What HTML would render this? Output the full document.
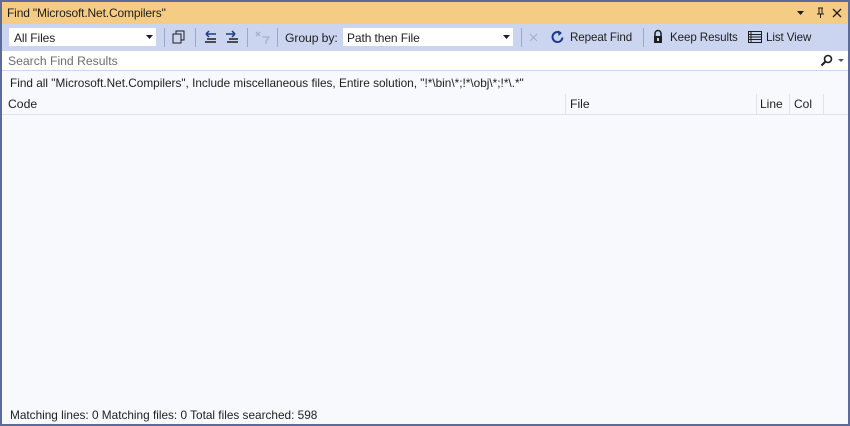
<!DOCTYPE html>
<html><head><meta charset="utf-8"><style>
*{margin:0;padding:0;box-sizing:border-box}
body{width:850px;height:426px;overflow:hidden;background:#5d6b99;font-family:"Liberation Sans",sans-serif;font-size:12px;color:#1e1e1e;position:relative}
.abs{position:absolute}
#title{left:2px;top:2px;width:846px;height:22px;background:#f5cc84;}
#title span{position:absolute;left:5px;top:4px;font-size:12px;letter-spacing:-0.15px}
#tb{left:2px;top:24px;width:846px;height:27px;background:#ccd5f0}
#main{left:2px;top:51px;width:846px;height:373px;background:#f8f9fd}
.sep{position:absolute;top:4px;width:1px;height:19px;background:#9aa7c9}
.combo{position:absolute;top:3px;height:20px;background:#fff;border:1px solid #ccd5f0}
.txt{position:absolute;white-space:nowrap}
.t{font-size:11.6px;letter-spacing:-0.1px}
</style></head><body>
<div id="title" class="abs"><span>Find "Microsoft.Net.Compilers"</span>
<svg class="abs" style="left:794px;top:8px" width="10" height="6"><path d="M1 1h7l-3.5 4z" fill="#1e1e1e"/></svg>
<svg class="abs" style="left:813px;top:5px" width="10" height="12"><path d="M3 1h5M4 1v6M7 1v6M2 7h7M5.5 7v4" stroke="#1e1e1e" fill="none"/></svg>
<svg class="abs" style="left:830px;top:6px" width="10" height="10"><path d="M1 1l8 8M9 1l-8 8" stroke="#1e1e1e" stroke-width="1.3"/></svg>
</div>
<div id="tb" class="abs">
<div class="combo" style="left:6px;width:149px"><span class="txt t" style="left:5px;top:3px;font-size:12px">All Files</span>
<svg class="abs" style="left:137px;top:7px" width="7" height="5"><path d="M0 0h7l-3.5 4z" fill="#1e1e1e"/></svg></div>
<div class="sep" style="left:162px"></div>
<svg class="abs" style="left:169px;top:5px" width="16" height="16"><rect x="2" y="5" width="8" height="9" fill="none" stroke="#1e1e1e"/><path d="M5 5V2h8v9h-3" fill="none" stroke="#1e1e1e"/></svg>
<div class="sep" style="left:193px"></div>
<svg class="abs" style="left:200px;top:5px" width="16" height="16"><path d="M4 5h10M4 5l3-3M4 5l3 3" stroke="#1e3a8a" fill="none" stroke-width="1.5"/><path d="M5 10h9M3 13h11" stroke="#1e1e1e" stroke-width="1.6"/></svg>
<svg class="abs" style="left:222px;top:5px" width="16" height="16"><path d="M2 5h9M11 5l-3-3M11 5l-3 3" stroke="#1e3a8a" fill="none" stroke-width="1.5"/><path d="M5 10h9M3 13h11" stroke="#1e1e1e" stroke-width="1.6"/></svg>
<div class="sep" style="left:245px"></div>
<svg class="abs" style="left:252px;top:5px" width="16" height="16"><path d="M2 3l4 4M6 3l-4 4M8 8h7l-3 4v3" stroke="#a7b0c8" fill="none" stroke-width="1.3"/></svg>
<div class="sep" style="left:275px"></div>
<span class="txt t" style="left:283px;top:7px;font-size:12.2px">Group by:</span>
<div class="combo" style="left:340px;width:172px"><span class="txt t" style="left:4px;top:3px;font-size:12px">Path then File</span>
<svg class="abs" style="left:160px;top:7px" width="7" height="5"><path d="M0 0h7l-3.5 4z" fill="#1e1e1e"/></svg></div>
<div class="sep" style="left:519px"></div>
<svg class="abs" style="left:527px;top:9px" width="10" height="10"><path d="M1 1l7 7M8 1l-7 7" stroke="#a7b0c8" stroke-width="1.2"/></svg>
<svg class="abs" style="left:548px;top:5px" width="16" height="16"><path d="M12.5 8.5a5 5 0 1 1-2-4.5" stroke="#1e3a8a" fill="none" stroke-width="2"/><path d="M8 1.5l4 2.5-3.5 3z" fill="#1e3a8a"/></svg>
<span class="txt t" style="left:568px;top:7px">Repeat Find</span>
<div class="sep" style="left:641px"></div>
<svg class="abs" style="left:650px;top:5px" width="12" height="16"><path d="M3 7V4.5a3 3 0 0 1 6 0V7" stroke="#1e1e1e" fill="none" stroke-width="1.5"/><rect x="2" y="7" width="8" height="7" fill="#1e1e1e"/><rect x="5" y="9" width="2" height="3" fill="#ccd5f0"/></svg>
<span class="txt t" style="left:668px;top:7px">Keep Results</span>
<svg class="abs" style="left:745px;top:5px" width="16" height="16"><rect x="1.5" y="2.5" width="13" height="11" fill="none" stroke="#1e1e1e"/><path d="M4 2.5v11M1.5 5.5h13M1.5 8h13M1.5 10.5h13" stroke="#1e1e1e"/></svg>
<span class="txt t" style="left:764px;top:7px">List View</span>
</div>
<div id="main" class="abs">
<div class="abs" style="left:0;top:0;width:846px;height:20px;background:#fff;border-bottom:1px solid #ccd5f0"></div>
<span class="txt" style="left:6px;top:3px;color:#6d6d6d;font-size:12.2px">Search Find Results</span>
<svg class="abs" style="left:818px;top:3px" width="14" height="14"><circle cx="8" cy="5" r="3.5" stroke="#1e1e1e" fill="none" stroke-width="1.6"/><path d="M5.5 7.5L1.5 11.5" stroke="#1e1e1e" stroke-width="2"/></svg>
<svg class="abs" style="left:836px;top:8px" width="6" height="4"><path d="M0 0h6l-3 3z" fill="#555"/></svg>
<span class="txt" style="left:8px;top:25px;font-size:11.8px">Find all "Microsoft.Net.Compilers", Include miscellaneous files, Entire solution, "!*\bin\*;!*\obj\*;!*\.*"</span>
<div class="abs" style="left:0;top:43px;width:846px;height:21px;border-bottom:1px solid #dde2ef"></div>
<span class="txt" style="left:6px;top:46px;font-size:12.2px">Code</span>
<div class="abs" style="left:563px;top:43px;width:1px;height:21px;background:#dde2ef"></div>
<span class="txt" style="left:568px;top:46px;font-size:12.2px">File</span>
<div class="abs" style="left:754px;top:43px;width:1px;height:21px;background:#dde2ef"></div>
<span class="txt" style="left:758px;top:46px;font-size:12px">Line</span>
<div class="abs" style="left:787px;top:43px;width:1px;height:21px;background:#dde2ef"></div>
<span class="txt" style="left:792px;top:46px;font-size:12px">Col</span>
<div class="abs" style="left:821px;top:43px;width:1px;height:21px;background:#dde2ef"></div>
<span class="txt" style="left:8px;top:357px;font-size:11.8px">Matching lines: 0 Matching files: 0 Total files searched: 598</span>
</div>
</body></html>
